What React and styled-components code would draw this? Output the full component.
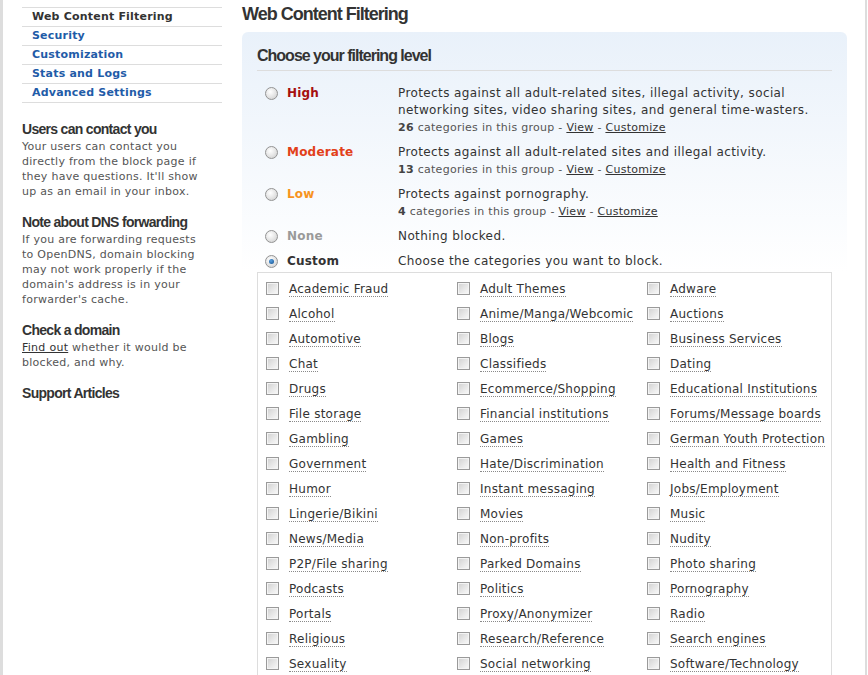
import React from "react";
import styled, { createGlobalStyle } from "styled-components";

const GlobalStyle = createGlobalStyle`
  body {
    margin: 0;
    background: #fff;
    font-family: "DejaVu Sans", Verdana, sans-serif;
    color: #333;
  }
`;

const Page = styled.div`
  display: flex;
  align-items: flex-start;
  width: 867px;
  min-height: 675px;
  box-sizing: border-box;
  border-left: 3px solid #ddd;
  border-right: 2px solid #ddd;
`;

const Sidebar = styled.div`
  width: 200px;
  margin-left: 19px;
  flex-shrink: 0;
`;

const Nav = styled.ul`
  list-style: none;
  margin: 7px 0 0;
  padding: 0;
  border-top: 1px solid #ddd;
`;

const NavItem = styled.li`
  height: 18px;
  line-height: 18px;
  border-bottom: 1px solid #ddd;
  padding-left: 10px;
  font-size: 11px;
  font-weight: bold;
  letter-spacing: 0.2px;
  color: ${(p) => (p.$active ? "#333" : "#1f5ca8")};
`;

const Section = styled.div`
  margin-top: ${(p) => (p.$first ? "18px" : "15px")};
`;

const SideHeading = styled.h3`
  margin: 0 0 1px;
  font-family: "Liberation Sans", Arial, sans-serif;
  font-size: 14px;
  line-height: 17px;
  letter-spacing: -0.7px;
  font-weight: bold;
  color: #333;
`;

const SideText = styled.p`
  margin: 0;
  width: 186px;
  font-size: 11px;
  line-height: 15px;
  letter-spacing: 0.27px;
  color: #555;
  a {
    color: #333;
    text-decoration: underline;
  }
`;

const Main = styled.div`
  width: 605px;
  margin-left: 20px;
  flex-shrink: 0;
`;

const Title = styled.h1`
  margin: 3px 0 7px;
  font-family: "Liberation Sans", Arial, sans-serif;
  font-size: 18px;
  line-height: 22px;
  letter-spacing: -1px;
  color: #333;
`;

const Panel = styled.div`
  border-radius: 6px;
  padding: 15px 15px 0;
  background: linear-gradient(#e9f1fa 0px, #ffffff 240px);
`;

const PanelHeading = styled.h2`
  margin: 0 0 14px;
  padding-bottom: 5px;
  border-bottom: 1px solid #ddd;
  font-family: "Liberation Sans", Arial, sans-serif;
  font-size: 16px;
  line-height: 18px;
  letter-spacing: -1px;
  color: #333;
`;

const LevelRow = styled.div`
  display: grid;
  grid-template-columns: 22px 111px 1fr;
  padding-left: 8px;
  margin-bottom: ${(p) => (p.$gap ? p.$gap : "7px")};
`;

const Radio = styled.span`
  width: 11px;
  height: 11px;
  margin-top: 2px;
  border-radius: 50%;
  border: 1px solid #939393;
  background: radial-gradient(circle at 40% 35%, #ffffff 0%, #e6e6e6 50%, #c9c9c9 100%);
  display: flex;
  align-items: center;
  justify-content: center;
  &::after {
    content: "";
    display: ${(p) => (p.$checked ? "block" : "none")};
    width: 5px;
    height: 5px;
    border-radius: 50%;
    background: radial-gradient(circle at 40% 35%, #5aa0e0, #0f4f8c);
  }
`;

const LevelName = styled.span`
  font-size: 12px;
  line-height: 17px;
  font-weight: bold;
  letter-spacing: 0.2px;
  color: ${(p) => p.$color};
`;

const LevelDesc = styled.div`
  max-width: 420px;
  font-size: 12px;
  line-height: 17px;
  letter-spacing: 0.4px;
  color: #333;
`;

const LevelMeta = styled.div`
  font-size: 11px;
  line-height: 18px;
  letter-spacing: 0.28px;
  color: #555;
  b {
    color: #444;
  }
  a {
    color: #333;
    text-decoration: underline;
  }
`;

const CategoryBox = styled.div`
  margin-top: 2px;
  border: 1px solid #ddd;
  border-bottom: none;
  padding: 4px 8px 10px;
  display: grid;
  grid-template-columns: 191px 190px 190px;
  grid-auto-rows: 25px;
  background: #fff;
`;

const Category = styled.label`
  display: flex;
  align-items: center;
  gap: 10px;
`;

const Checkbox = styled.span`
  width: 11px;
  height: 11px;
  margin-top: -3px;
  flex-shrink: 0;
  border: 1px solid #9a9a9a;
  background: linear-gradient(135deg, #d0d0d0 0%, #e8e8e8 55%, #fafafa 100%);
  box-shadow: inset 0 0 0 1px #f4f4f4;
`;

const CategoryName = styled.span`
  font-size: 12px;
  line-height: 14px;
  letter-spacing: 0.25px;
  white-space: nowrap;
  color: #333;
  border-bottom: 1px dotted #8a8a8a;
`;

const levels = [
  {
    name: "High",
    color: "#a50f0f",
    desc: "Protects against all adult-related sites, illegal activity, social networking sites, video sharing sites, and general time-wasters.",
    count: 26,
  },
  {
    name: "Moderate",
    color: "#e2401a",
    desc: "Protects against all adult-related sites and illegal activity.",
    count: 13,
  },
  { name: "Low", color: "#f7941e", desc: "Protects against pornography.", count: 4 },
  { name: "None", color: "#9a9a9a", desc: "Nothing blocked.", gap: "8px" },
  { name: "Custom", color: "#333", desc: "Choose the categories you want to block.", checked: true, gap: "0" },
];

const categories = [
  "Academic Fraud", "Adult Themes", "Adware",
  "Alcohol", "Anime/Manga/Webcomic", "Auctions",
  "Automotive", "Blogs", "Business Services",
  "Chat", "Classifieds", "Dating",
  "Drugs", "Ecommerce/Shopping", "Educational Institutions",
  "File storage", "Financial institutions", "Forums/Message boards",
  "Gambling", "Games", "German Youth Protection",
  "Government", "Hate/Discrimination", "Health and Fitness",
  "Humor", "Instant messaging", "Jobs/Employment",
  "Lingerie/Bikini", "Movies", "Music",
  "News/Media", "Non-profits", "Nudity",
  "P2P/File sharing", "Parked Domains", "Photo sharing",
  "Podcasts", "Politics", "Pornography",
  "Portals", "Proxy/Anonymizer", "Radio",
  "Religious", "Research/Reference", "Search engines",
  "Sexuality", "Social networking", "Software/Technology",
  "Sports", "Tasteless", "Television",
];

const navItems = ["Web Content Filtering", "Security", "Customization", "Stats and Logs", "Advanced Settings"];

export default function App() {
  return (
    <>
      <GlobalStyle />
      <Page>
        <Sidebar>
          <Nav>
            {navItems.map((item, i) => (
              <NavItem key={item} $active={i === 0}>
                {item}
              </NavItem>
            ))}
          </Nav>
          <Section $first>
            <SideHeading>Users can contact you</SideHeading>
            <SideText>
              Your users can contact you directly from the block page if they have questions. It'll show up as an email
              in your inbox.
            </SideText>
          </Section>
          <Section>
            <SideHeading>Note about DNS forwarding</SideHeading>
            <SideText>
              If you are forwarding requests to OpenDNS, domain blocking may not work properly if the domain's address
              is in your forwarder's cache.
            </SideText>
          </Section>
          <Section>
            <SideHeading>Check a domain</SideHeading>
            <SideText>
              <a href="#">Find out</a> whether it would be blocked, and why.
            </SideText>
          </Section>
          <Section>
            <SideHeading>Support Articles</SideHeading>
          </Section>
        </Sidebar>
        <Main>
          <Title>Web Content Filtering</Title>
          <Panel>
            <PanelHeading>Choose your filtering level</PanelHeading>
            {levels.map((lvl) => (
              <LevelRow key={lvl.name} $gap={lvl.gap}>
                <Radio $checked={lvl.checked} />
                <LevelName $color={lvl.color}>{lvl.name}</LevelName>
                <div>
                  <LevelDesc>{lvl.desc}</LevelDesc>
                  {lvl.count && (
                    <LevelMeta>
                      <b>{lvl.count}</b> categories in this group - <a href="#">View</a> -{" "}
                      <a href="#">Customize</a>
                    </LevelMeta>
                  )}
                </div>
              </LevelRow>
            ))}
            <CategoryBox>
              {categories.map((c) => (
                <Category key={c}>
                  <Checkbox />
                  <CategoryName>{c}</CategoryName>
                </Category>
              ))}
            </CategoryBox>
          </Panel>
        </Main>
      </Page>
    </>
  );
}
